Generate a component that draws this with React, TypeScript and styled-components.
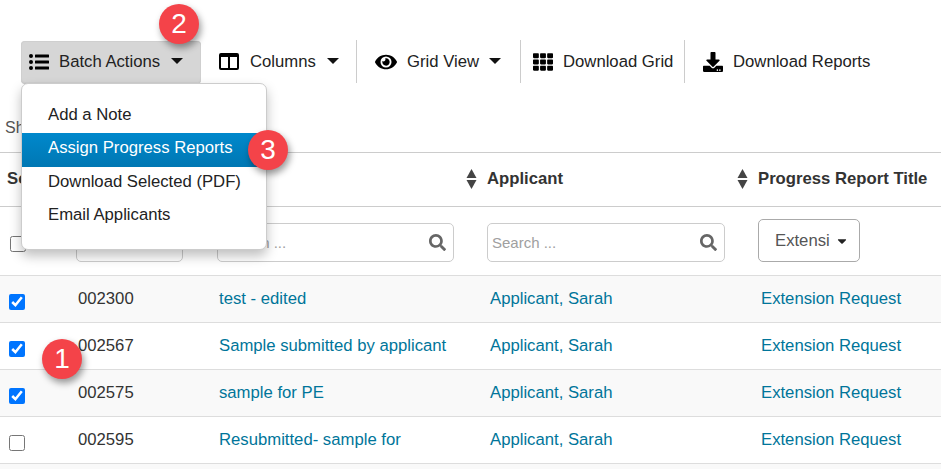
import React from "react";
import styled, { createGlobalStyle } from "styled-components";
import { FaCaretDown, FaDownload, FaEye, FaSearch, FaTh } from "react-icons/fa";

const Global = createGlobalStyle`
  html, body { margin: 0; padding: 0; background: #fff; }
  body { font-family: "Liberation Sans", Arial, sans-serif; font-size: 16.7px; color: #333; }
`;

const Page = styled.div`
  position: relative;
  width: 941px;
  height: 469px;
  overflow: hidden;
  background: #fff;
`;

const Toolbar = styled.div`
  display: flex;
  align-items: stretch;
  height: 43px;
  margin-top: 40px;
  padding-left: 21px;
`;

const ToolButton = styled.div<{ $w: number; $active?: boolean; $pad: number; $last?: boolean }>`
  box-sizing: border-box;
  width: ${(p) => p.$w}px;
  display: flex;
  align-items: center;
  padding-left: ${(p) => p.$pad}px;
  color: #222;
  white-space: nowrap;
  border-right: ${(p) => (p.$last ? "none" : p.$active ? "none" : "1px solid #ccc")};
  ${(p) =>
    p.$active
      ? `background:#d6d6d6;border-radius:4px;margin-top:1px;box-shadow:inset 0 0 0 1px #cfcfcf, 0 1px 0 #c4c4c4;`
      : ""}
`;

const ToolIcon = styled.span<{ $gap: number }>`
  display: inline-flex;
  margin-right: ${(p) => p.$gap}px;
  color: #000;
  svg { display: block; }
`;

const Caret = styled.span<{ $gap: number }>`
  width: 0;
  height: 0;
  margin-left: ${(p) => p.$gap}px;
  margin-top: -2px;
  border-left: 6px solid transparent;
  border-right: 6px solid transparent;
  border-top: 6px solid #111;
`;

const Info = styled.div`
  height: 70px;
  padding: 33px 0 0 5px;
  box-sizing: border-box;
  font-size: 16px;
  line-height: 24px;
  color: #555;
  border-bottom: 1px solid #ccc;
`;

const columns = "76px 141px 270px 271px 183px";

const HeadRow = styled.div`
  display: grid;
  grid-template-columns: ${columns};
  height: 54px;
  box-sizing: border-box;
  align-items: center;
  border-bottom: 1px solid #ccc;
  padding-bottom: 2px;
  font-weight: 700;
  color: #333;
`;

const HeadCell = styled.div<{ $left?: number }>`
  display: flex;
  align-items: center;
  gap: 10px;
  white-space: nowrap;
  margin-left: ${(p) => p.$left ?? 0}px;
`;

const FilterRow = styled.div`
  display: grid;
  grid-template-columns: ${columns};
  height: 69px;
  box-sizing: border-box;
  border-bottom: 1px solid #ddd;
  padding-bottom: 13px;
  align-items: end;
`;

const FilterCheck = styled.input`
  width: 16px;
  height: 16px;
  margin: 0 0 10px 10px;
`;

const SelectStub = styled.div`
  box-sizing: border-box;
  width: 107px;
  height: 40px;
  border: 1px solid #ccc;
  border-radius: 5px;
  display: flex;
  align-items: center;
  justify-content: flex-end;
  padding-right: 7px;
  color: #444;
`;

const SearchBox = styled.div<{ $w: number }>`
  box-sizing: border-box;
  width: ${(p) => p.$w}px;
  height: 39px;
  border: 1px solid #ccc;
  border-radius: 5px;
  display: flex;
  align-items: center;
  justify-content: space-between;
  padding: 0 7px 0 4px;
  font-size: 15px;
  color: #a0a0a0;
  svg { color: #666; font-size: 17px; }
`;

const FilterButton = styled.div`
  box-sizing: border-box;
  width: 102px;
  height: 43px;
  border: 1px solid #aaa;
  border-radius: 5px;
  display: flex;
  align-items: center;
  padding-left: 16px;
  color: #555;
  svg { margin-left: 5px; color: #222; font-size: 14px; }
`;

const FilterLabel = styled.span`
  white-space: nowrap;
`;

const Row = styled.div<{ $odd: boolean }>`
  display: grid;
  grid-template-columns: ${columns};
  height: 47px;
  box-sizing: border-box;
  align-items: center;
  background: ${(p) => (p.$odd ? "#f9f9f9" : "#fff")};
  border-bottom: 1px solid #ddd;
`;

const RowCheck = styled.input`
  width: 16px;
  height: 16px;
  margin: 5px 0 0 9px;
`;

const IdCell = styled.div`
  padding-left: 2px;
  color: #333;
`;

const LinkCell = styled.div<{ $pad: number }>`
  padding-left: ${(p) => p.$pad}px;
  color: #00759a;
  white-space: nowrap;
`;

const Tail = styled.div`
  height: 6px;
  background: #f9f9f9;
`;

const Menu = styled.div`
  position: absolute;
  left: 21px;
  top: 83px;
  width: 246px;
  height: 167px;
  box-sizing: border-box;
  background: #fff;
  border: 1px solid #ccc;
  border-radius: 7px;
  box-shadow: 0 6px 12px rgba(0, 0, 0, 0.25);
  padding: 16px 0;
`;

const MenuItem = styled.div<{ $on?: boolean }>`
  box-sizing: border-box;
  height: 33.3px;
  line-height: 29px;
  padding-left: 26px;
  white-space: nowrap;
  color: ${(p) => (p.$on ? "#fff" : "#222")};
  background: ${(p) => (p.$on ? "linear-gradient(to bottom, #0088cc, #0077b3)" : "transparent")};
`;

const Badge = styled.div<{ $x: number; $y: number }>`
  position: absolute;
  left: ${(p) => p.$x}px;
  top: ${(p) => p.$y}px;
  width: 40px;
  height: 40px;
  border-radius: 50%;
  background: #f44349;
  color: #fff;
  font-size: 28px;
  line-height: 40px;
  text-align: center;
  box-shadow: 2px 4px 7px rgba(0, 0, 0, 0.4);
`;

const ListIcon = () => (
  <svg width="20" height="16" viewBox="0 0 20 16" aria-hidden="true">
    <circle cx="2" cy="2" r="2" fill="#000" />
    <circle cx="2" cy="8" r="2" fill="#000" />
    <circle cx="2" cy="14" r="2" fill="#000" />
    <rect x="6" y="0.5" width="14" height="3" rx="0.5" fill="#000" />
    <rect x="6" y="6.5" width="14" height="3" rx="0.5" fill="#000" />
    <rect x="6" y="12.5" width="14" height="3" rx="0.5" fill="#000" />
  </svg>
);

const ColumnsIcon = () => (
  <svg width="20" height="17" viewBox="0 0 20 17" aria-hidden="true">
    <path
      fillRule="evenodd"
      fill="#000"
      d="M2 0h16a2 2 0 0 1 2 2v13a2 2 0 0 1-2 2H2a2 2 0 0 1-2-2V2a2 2 0 0 1 2-2ZM2 4v11h7V4H2Zm9 0v11h7V4h-7Z"
    />
  </svg>
);

const SortIcon = () => (
  <svg width="11" height="20" viewBox="0 0 11 20" aria-hidden="true">
    <path d="M5.5 0 10.5 9H.5Z" fill="#444" />
    <path d="M5.5 20 10.5 11H.5Z" fill="#444" />
  </svg>
);

const rows = [
  { id: "002300", title: "test - edited", on: true },
  { id: "002567", title: "Sample submitted by applicant", on: true },
  { id: "002575", title: "sample for PE", on: true },
  { id: "002595", title: "Resubmitted- sample for", on: false },
];

export default function App() {
  return (
    <Page>
      <Global />
      <Toolbar>
        <ToolButton $w={180} $pad={8} $active>
          <ToolIcon $gap={10}><ListIcon /></ToolIcon>
          Batch Actions
          <Caret $gap={11} />
        </ToolButton>
        <ToolButton $w={156} $pad={18}>
          <ToolIcon $gap={11}><ColumnsIcon /></ToolIcon>
          Columns
          <Caret $gap={11} />
        </ToolButton>
        <ToolButton $w={164} $pad={18}>
          <ToolIcon $gap={10}><FaEye size={22} /></ToolIcon>
          Grid View
          <Caret $gap={10} />
        </ToolButton>
        <ToolButton $w={164} $pad={12}>
          <ToolIcon $gap={10}><FaTh size={20} /></ToolIcon>
          Download Grid
        </ToolButton>
        <ToolButton $w={240} $pad={18} $last>
          <ToolIcon $gap={10}><FaDownload size={20} /></ToolIcon>
          Download Reports
        </ToolButton>
      </Toolbar>
      <Info>Showing</Info>
      <HeadRow>
        <HeadCell $left={7}>Select</HeadCell>
        <HeadCell />
        <HeadCell />
        <HeadCell $left={-21}><SortIcon />Applicant</HeadCell>
        <HeadCell $left={-21}><SortIcon />Progress Report Title</HeadCell>
      </HeadRow>
      <FilterRow>
        <FilterCheck type="checkbox" readOnly />
        <SelectStub><FaCaretDown size={10} /></SelectStub>
        <SearchBox $w={237}>Search ...<FaSearch /></SearchBox>
        <SearchBox $w={238}>Search ...<FaSearch /></SearchBox>
        <FilterButton><FilterLabel>Extensi</FilterLabel><FaCaretDown /></FilterButton>
      </FilterRow>
      {rows.map((r, i) => (
        <Row key={r.id} $odd={i % 2 === 0}>
          <RowCheck type="checkbox" checked={r.on} readOnly />
          <IdCell>{r.id}</IdCell>
          <LinkCell $pad={2}>{r.title}</LinkCell>
          <LinkCell $pad={3}>Applicant, Sarah</LinkCell>
          <LinkCell $pad={3}>Extension Request</LinkCell>
        </Row>
      ))}
      <Tail />
      <Menu>
        <MenuItem>Add a Note</MenuItem>
        <MenuItem $on>Assign Progress Reports</MenuItem>
        <MenuItem>Download Selected (PDF)</MenuItem>
        <MenuItem>Email Applicants</MenuItem>
      </Menu>
      <Badge $x={159} $y={4}>2</Badge>
      <Badge $x={248} $y={130}>3</Badge>
      <Badge $x={42} $y={339}>1</Badge>
    </Page>
  );
}
